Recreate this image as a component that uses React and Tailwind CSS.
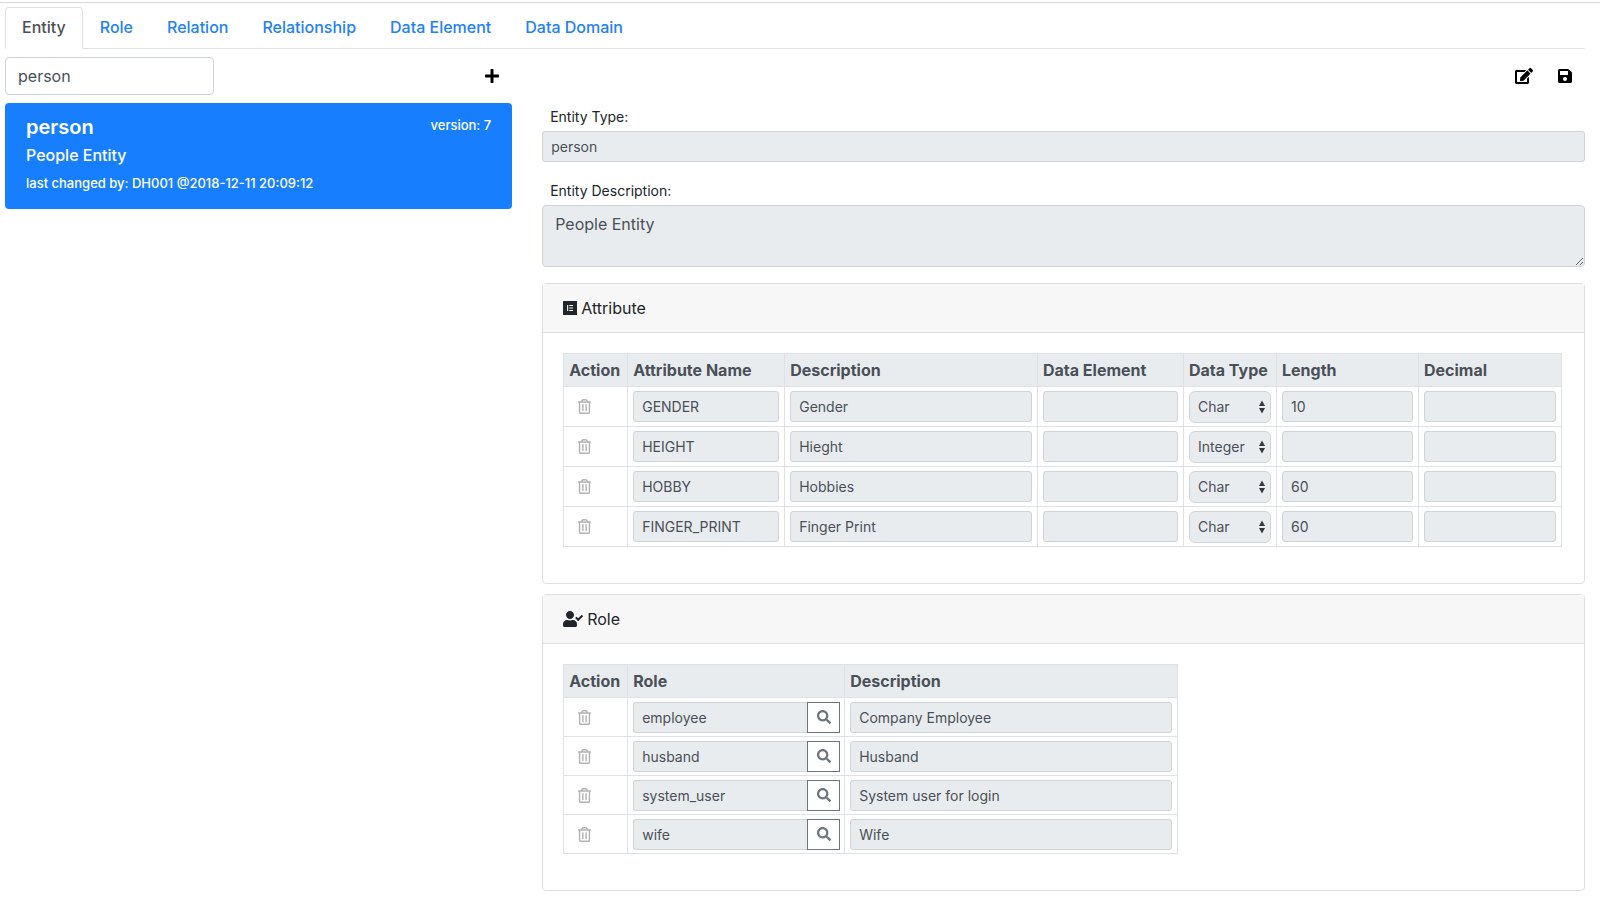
import { useState } from "react";
import { FaEdit, FaPlus, FaRegTrashAlt, FaSave, FaSearch, FaUserCheck } from "react-icons/fa";

const tabs = ["Entity", "Role", "Relation", "Relationship", "Data Element", "Data Domain"];

const attributes = [
  { name: "GENDER", description: "Gender", element: "", type: "Char", length: "10", decimal: "" },
  { name: "HEIGHT", description: "Hieght", element: "", type: "Integer", length: "", decimal: "" },
  { name: "HOBBY", description: "Hobbies", element: "", type: "Char", length: "60", decimal: "" },
  { name: "FINGER_PRINT", description: "Finger Print", element: "", type: "Char", length: "60", decimal: "" },
];

const roles = [
  { name: "employee", description: "Company Employee" },
  { name: "husband", description: "Husband" },
  { name: "system_user", description: "System user for login" },
  { name: "wife", description: "Wife" },
];

function AttributeIcon() {
  return (
    <svg viewBox="0 0 14 14" className="w-3.5 h-3.5" aria-hidden="true">
      <rect width="14" height="14" rx="0.6" fill="#212529" />
      <path d="M4.1 4h1.1v6H4.1zM6.2 4h3.8v1.1H6.2zM6.2 6.45h3.8v1.1H6.2zM6.2 8.9h3.8V10H6.2z" fill="#f7f7f7" />
    </svg>
  );
}

function Field({ label, value }) {
  return (
    <input
      aria-label={label}
      defaultValue={value}
      readOnly
      className="block w-full h-[31px] px-2 rounded-[3px] border border-[#ced4da] bg-[#e9ecef] text-sm text-[#495057] outline-none"
    />
  );
}

function TypeSelect({ value }) {
  return (
    <div className="grid items-center">
      <select
        aria-label="Data Type"
        defaultValue={value}
        className="col-start-1 row-start-1 appearance-none w-full h-8 pl-2 pr-4 rounded-md border border-[#ced4da] bg-[#e9ecef] text-sm text-[#495057] outline-none"
      >
        <option>Char</option>
        <option>Integer</option>
      </select>
      <svg viewBox="0 0 6 14" className="col-start-1 row-start-1 justify-self-end mr-1.5 w-1.5 h-3.5 pointer-events-none" aria-hidden="true">
        <path d="M3 0.5 6 6H0zM3 13.5 6 8H0z" fill="#343a40" />
      </svg>
    </div>
  );
}

function DeleteButton({ name }) {
  return (
    <button type="button" aria-label={`Delete ${name}`} className="block ml-2 text-[#b2b2b2]">
      <FaRegTrashAlt size={15} />
    </button>
  );
}

function HeadRow({ labels }) {
  return (
    <thead>
      <tr className="h-[33px] bg-[#e9ecef]">
        {labels.map((label) => (
          <th key={label} className="border border-[#dee2e6] px-[5px] text-left text-base leading-6 font-bold text-[#495057] whitespace-nowrap">
            {label}
          </th>
        ))}
      </tr>
    </thead>
  );
}

function Card({ icon, title, children }) {
  return (
    <section className="rounded-sm border border-[#dfdfdf] bg-white">
      <h2 className="flex items-center gap-1 h-[49px] px-5 border-b border-[#dfdfdf] bg-[#f7f7f7] text-[#212529]">
        {icon}
        {title}
      </h2>
      <div className="pt-5 pb-9 pl-5 pr-[22px]">{children}</div>
    </section>
  );
}

export default function App() {
  const [active, setActive] = useState("Entity");
  const [search, setSearch] = useState("person");

  return (
    <div className="pt-0.5 font-['Inter','Liberation_Sans',sans-serif] text-base leading-6 text-[#212529]">
      <div className="border-t border-[#d5d5d5] pt-1 pl-[5px] pr-[15px]">
        {/* Tabs */}
        <nav className="flex border-b border-[#dee2e6]">
          {tabs.map((tab) => (
            <button
              key={tab}
              type="button"
              onClick={() => setActive(tab)}
              className={
                tab === active
                  ? "-mb-px h-[42px] px-4 pb-0.5 rounded-t-sm border border-[#dee2e6] border-b-white bg-white font-medium text-[#495057]"
                  : "-mb-px h-[42px] px-4 pb-0.5 border border-transparent font-medium text-[#2280f8]"
              }
            >
              {tab}
            </button>
          ))}
        </nav>

        <div className="flex pt-2">
          {/* Entity list */}
          <aside className="w-[34%] pr-[30px]">
            <div className="flex items-center justify-between pr-3">
              <input
                aria-label="Search entity"
                value={search}
                onChange={(e) => setSearch(e.target.value)}
                className="w-[209px] h-[38px] px-3 rounded-sm border border-[#ced4da] text-[#495057] outline-none"
              />
              <button type="button" aria-label="Add entity" className="text-black">
                <FaPlus size={16} />
              </button>
            </div>

            <a href="#person" className="block mt-2 h-[106px] px-[21px] pt-3 rounded-sm bg-[#177ffd] text-white">
              <div className="flex justify-between">
                <h5 className="text-xl leading-6 font-semibold">person</h5>
                <small className="text-[13px] leading-5 font-medium">version: 7</small>
              </div>
              <p className="mt-1 leading-6 font-medium">People Entity</p>
              <small className="block mt-1 text-[13px] leading-6 font-medium">last changed by: DH001 @2018-12-11 20:09:12</small>
            </a>
          </aside>

          {/* Entity details */}
          <main className="flex-1 min-w-0">
            <div className="flex items-center justify-end gap-6 h-[38px] pr-3 text-black">
              <button type="button" aria-label="Edit">
                <FaEdit size={18} />
              </button>
              <button type="button" aria-label="Save">
                <FaSave size={16} />
              </button>
            </div>

            <label htmlFor="entityType" className="block mt-2.5 px-2 text-sm leading-6">
              Entity Type:
            </label>
            <input
              id="entityType"
              defaultValue="person"
              readOnly
              className="block mt-0.5 w-full h-[31px] px-2 rounded-[3px] border border-[#ced4da] bg-[#e9ecef] text-sm text-[#495057] outline-none"
            />

            <label htmlFor="entityDescription" className="block mt-[17px] px-2 text-sm leading-6">
              Entity Description:
            </label>
            <textarea
              id="entityDescription"
              defaultValue="People Entity"
              readOnly
              className="block mt-0.5 mb-4 w-full h-[62px] px-3 py-1.5 rounded-sm border border-[#ced4da] bg-[#e9ecef] text-base text-[#495057] outline-none resize-y"
            />

            <div className="flex flex-col gap-2.5">
              <Card icon={<AttributeIcon />} title="Attribute">
                <table className="w-full table-fixed border-collapse">
                  <colgroup>
                    <col className="w-16" />
                    <col className="w-[157px]" />
                    <col />
                    <col className="w-[146px]" />
                    <col className="w-[93px]" />
                    <col className="w-[142px]" />
                    <col className="w-[143px]" />
                  </colgroup>
                  <HeadRow labels={["Action", "Attribute Name", "Description", "Data Element", "Data Type", "Length", "Decimal"]} />
                  <tbody>
                    {attributes.map((row) => (
                      <tr key={row.name} className="h-10">
                        <td className="border border-[#dee2e6] px-[5px]">
                          <DeleteButton name={row.name} />
                        </td>
                        <td className="border border-[#dee2e6] px-[5px]">
                          <Field label="Attribute Name" value={row.name} />
                        </td>
                        <td className="border border-[#dee2e6] px-[5px]">
                          <Field label="Description" value={row.description} />
                        </td>
                        <td className="border border-[#dee2e6] px-[5px]">
                          <Field label="Data Element" value={row.element} />
                        </td>
                        <td className="border border-[#dee2e6] px-[5px]">
                          <TypeSelect value={row.type} />
                        </td>
                        <td className="border border-[#dee2e6] px-[5px]">
                          <Field label="Length" value={row.length} />
                        </td>
                        <td className="border border-[#dee2e6] px-[5px]">
                          <Field label="Decimal" value={row.decimal} />
                        </td>
                      </tr>
                    ))}
                  </tbody>
                </table>
              </Card>

              <Card icon={<FaUserCheck className="w-5 h-4" />} title="Role">
                <table className="w-[615px] table-fixed border-collapse">
                  <colgroup>
                    <col className="w-16" />
                    <col className="w-[217px]" />
                    <col />
                  </colgroup>
                  <HeadRow labels={["Action", "Role", "Description"]} />
                  <tbody>
                    {roles.map((row) => (
                      <tr key={row.name} className="h-[39px]">
                        <td className="border border-[#dee2e6] px-[5px]">
                          <DeleteButton name={row.name} />
                        </td>
                        <td className="border border-[#dee2e6] pl-[5px] pr-1">
                          <div className="flex">
                            <input
                              aria-label="Role"
                              defaultValue={row.name}
                              readOnly
                              className="flex-1 min-w-0 h-[31px] px-2 rounded-l-[3px] border border-r-0 border-[#ced4da] bg-[#e9ecef] text-sm text-[#495057] outline-none"
                            />
                            <button
                              type="button"
                              aria-label={`Look up ${row.name}`}
                              className="flex items-center justify-center w-[33px] h-[31px] border border-[#6c757d] bg-white text-[#6c757d]"
                            >
                              <FaSearch size={14} />
                            </button>
                          </div>
                        </td>
                        <td className="border border-[#dee2e6] px-[5px]">
                          <Field label="Description" value={row.description} />
                        </td>
                      </tr>
                    ))}
                  </tbody>
                </table>
              </Card>
            </div>
          </main>
        </div>
      </div>
    </div>
  );
}
